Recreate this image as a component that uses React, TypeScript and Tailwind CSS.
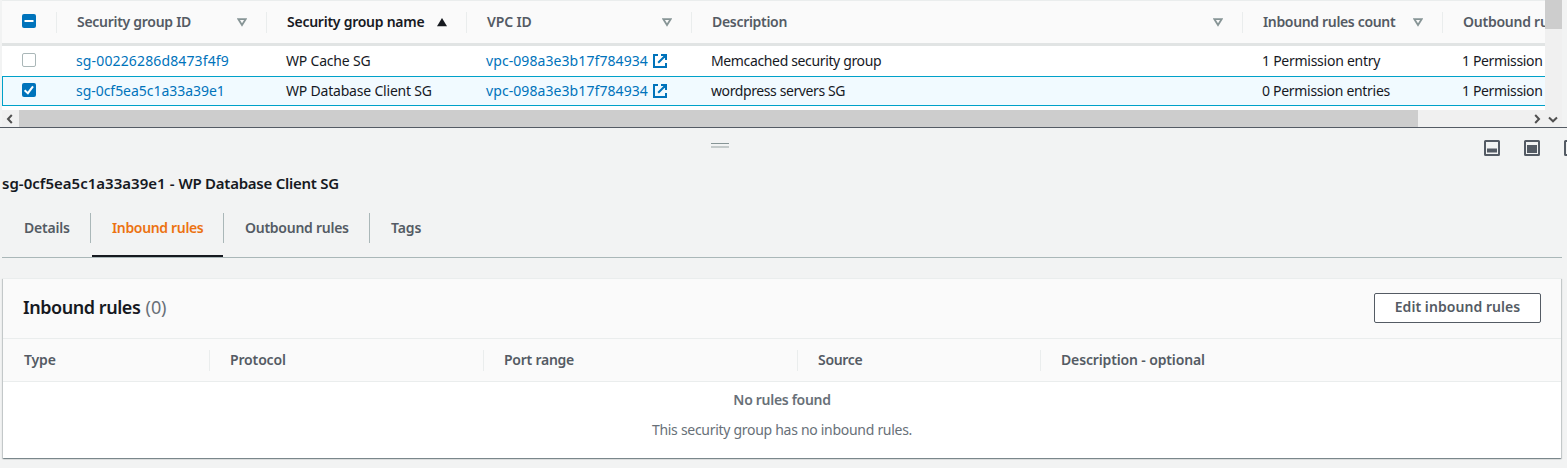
import type { ReactNode } from "react";

function SortIcon({ active = false }: { active?: boolean }) {
  return active ? (
    <svg className="h-[9px] w-[10px] shrink-0" viewBox="0 0 10 9">
      <path d="M5 0 10 8.2H0Z" fill="#16191f" />
    </svg>
  ) : (
    <svg className="h-[9px] w-[10px] shrink-0" viewBox="0 0 10 9">
      <path d="M1.4 1.2H8.6L5 7Z" fill="none" stroke="#879596" strokeWidth="1.8" />
    </svg>
  );
}

function Checkbox({ state }: { state: "off" | "on" | "mixed" }) {
  if (state === "off") {
    return <span className="block size-[14px] rounded-[2px] border border-[#aab7b8] bg-white" />;
  }
  return (
    <span className="block size-[14px] rounded-[2px] bg-[#0073bb]">
      <svg viewBox="0 0 14 14" className="block size-[14px]" fill="none" stroke="#fff" strokeWidth="2">
        {state === "on" ? <path d="M2.6 7.2 5.9 10.2 11 3.4" /> : <path d="M2.5 7H11.5" />}
      </svg>
    </span>
  );
}

function ExternalIcon() {
  return (
    <svg viewBox="0 0 14 14" className="size-[14px] shrink-0" fill="none" stroke="#0073bb" strokeWidth="2">
      <path d="M5 1H1V13H13V9M8 1H13V6M13 1 5.2 8.8" />
    </svg>
  );
}

function HeaderCell({ width, last = false, children }: { width: string; last?: boolean; children: ReactNode }) {
  return (
    <div className={`flex h-[21px] shrink-0 items-center justify-between pr-[19px] pb-px pl-5 ${last ? "" : "border-r border-[#eaeded]"} ${width}`}>
      {children}
    </div>
  );
}

const WIDTHS = ["w-[210px]", "w-[200px]", "w-[225px]", "w-[551px]", "w-[200px]", "w-[200px]"];

type Row = { id: string; idCls: string; name: string; desc: string; descCls: string; inbound: string; inCls: string; selected: boolean };

const ROWS: Row[] = [
  { id: "sg-00226286d8473f4f9", idCls: "tracking-[0.14px]", name: "WP Cache SG", desc: "Memcached security group", descCls: "tracking-[-0.36px]", inbound: "1 Permission entry", inCls: "tracking-[-0.26px]", selected: false },
  { id: "sg-0cf5ea5c1a33a39e1", idCls: "tracking-[-0.04px]", name: "WP Database Client SG", desc: "wordpress servers SG", descCls: "tracking-[-0.4px]", inbound: "0 Permission entries", inCls: "tracking-[-0.3px]", selected: true },
];

function TableRow({ row }: { row: Row }) {
  const cell = "shrink-0 pl-[19px]";
  return (
    <div className={`flex h-[30px] items-center overflow-hidden border whitespace-nowrap ${row.selected ? "border-r-0 border-[#00a1c9] bg-[#f1faff]" : "border-transparent bg-white"}`}>
      <div className="w-[54px] shrink-0 pb-[2px] pl-[19px]">
        <Checkbox state={row.selected ? "on" : "off"} />
      </div>
      <div className={`${cell} w-[210px] text-[#0073bb] ${row.idCls}`}>{row.id}</div>
      <div className={`${cell} w-[200px] tracking-[-0.2px]`}>{row.name}</div>
      <div className={`${cell} flex w-[225px] items-center gap-1 text-[#0073bb]`}>
        <span className="w-[163px] tracking-[0.08px]">vpc-098a3e3b17f784934</span>
        <ExternalIcon />
      </div>
      <div className={`${cell} w-[551px] ${row.descCls}`}>{row.desc}</div>
      <div className={`${cell} w-[200px] ${row.inCls}`}>{row.inbound}</div>
      <div className={`${cell} w-[200px] tracking-[-0.35px]`}>1 Permission entry</div>
    </div>
  );
}

function PanelIcon({ y, h }: { y: number; h: number }) {
  return (
    <svg viewBox="0 0 16 16" className="size-4 shrink-0">
      <rect x="1" y="1" width="14" height="14" rx="0.5" fill="none" stroke="#545b64" strokeWidth="2" />
      <rect x="3" y={y} width="10" height={h} fill="#545b64" />
    </svg>
  );
}

function Chevron({ d }: { d: string }) {
  return (
    <svg viewBox="0 0 10 10" className="size-[10px]" fill="none" stroke="#505050" strokeWidth="2">
      <path d={d} />
    </svg>
  );
}

export default function App() {
  return (
    <div className="h-[468px] w-full overflow-hidden bg-[#f2f3f3] font-['Noto_Sans',sans-serif] text-[14px] leading-[20px] text-[#16191f]">
      <div className="flex h-[128px] flex-col border-b border-[#545b64] pl-[2px]">
        <div className="flex h-[110px]">
          <div className="w-[1543px] overflow-hidden bg-white">
            <div className="flex h-[46px] items-start border-t border-b-[3px] border-t-[#eaeded] border-b-[#e1e4e4] bg-[#fafafa] pt-[11px] font-semibold whitespace-nowrap text-[#545b64]">
              <div className="h-[21px] w-[55px] shrink-0 border-r border-[#eaeded] pt-[2px] pl-[20px]">
                <Checkbox state="mixed" />
              </div>
              <HeaderCell width={WIDTHS[0]}>
                <span className="tracking-[-0.28px]">Security group ID</span>
                <SortIcon />
              </HeaderCell>
              <HeaderCell width={WIDTHS[1]}>
                <span className="tracking-[-0.25px] text-[#16191f]">Security group name</span>
                <SortIcon active />
              </HeaderCell>
              <HeaderCell width={WIDTHS[2]}>
                <span className="tracking-[-0.15px]">VPC ID</span>
                <SortIcon />
              </HeaderCell>
              <HeaderCell width={WIDTHS[3]}>
                <span className="tracking-[-0.3px]">Description</span>
                <SortIcon />
              </HeaderCell>
              <HeaderCell width={WIDTHS[4]}>
                <span className="tracking-[-0.34px]">Inbound rules count</span>
                <SortIcon />
              </HeaderCell>
              <HeaderCell width={WIDTHS[5]} last>
                <span className="tracking-[-0.25px]">Outbound rules count</span>
              </HeaderCell>
            </div>
            {ROWS.map((row) => (
              <TableRow key={row.id} row={row} />
            ))}
          </div>
          <div className="w-[17px] bg-[#f0f0f0]">
            <div className="h-[29px] bg-[#cdcdcd]" />
          </div>
        </div>
        <div className="flex h-[17px] w-[1560px] items-center bg-[#f0f0f0]">
          <div className="flex w-[17px] justify-center pr-px">
            <Chevron d="M6.8 1 3 5 6.8 9" />
          </div>
          <div className="h-[17px] w-[1399px] bg-[#cdcdcd]" />
          <div className="flex flex-1 items-center justify-end gap-[6px] pr-[4px]">
            <Chevron d="M3.2 1 7 5 3.2 9" />
            <Chevron d="M1 3.5 5 7.3 9 3.5" />
          </div>
        </div>
      </div>

      <div className="flex h-[44px] w-[1600px] pt-3">
        <div className="w-[711px]" />
        <div className="flex flex-col gap-[2px] pt-[3px]">
          <div className="h-px w-[18px] bg-[#879596]" />
          <div className="h-[2px] w-[18px] bg-[#c4caca]" />
        </div>
        <div className="w-[755px]" />
        <div className="flex gap-6">
          <PanelIcon y={8.5} h={4} />
          <PanelIcon y={5} h={8} />
          <PanelIcon y={3.5} h={9} />
        </div>
      </div>

      <h2 className="pt-px pb-px pl-[2px] text-[15px] leading-[20px] font-semibold">
        <span className="tracking-[0.02px]">sg-0cf5ea5c1a33a39e1 - </span>
        <span className="tracking-[-0.25px]">WP Database Client SG</span>
      </h2>

      <div className="mt-[19px] ml-[2px] flex h-[45px] w-[1560px] items-start border-b border-[#aab7b8] font-semibold text-[#545b64]">
        <div className="h-[30px] w-[89px] border-r border-[#aab7b8] pt-[5px] pl-[22px] tracking-[-0.2px]">Details</div>
        <div className="h-[44px] w-[133px] pl-px">
          <div className="flex h-[44px] w-[132px] flex-col">
            <div className="h-[30px] border-r border-[#aab7b8] pt-[5px] pl-5 tracking-[-0.34px] text-[#ec7211]">Inbound rules</div>
            <div className="mt-[12px] h-[2px] w-[131px] bg-[#16191f]" />
          </div>
        </div>
        <div className="h-[30px] w-[146px] border-r border-[#aab7b8] pt-[5px] pl-[21px] tracking-[-0.26px]">Outbound rules</div>
        <div className="h-[30px] pt-[5px] pl-[21px] tracking-[-0.1px]">Tags</div>
      </div>

      <div className="mt-5 ml-[3px] h-[180px] w-[1558px] border-t border-[#eaeded] bg-white shadow-[0_1px_1px_0_rgba(0,28,36,0.3),1px_1px_1px_0_rgba(0,28,36,0.15),-1px_1px_1px_0_rgba(0,28,36,0.15)]">
        <div className="flex h-[60px] items-center justify-between border-b border-[#eaeded] bg-[#fafafa] pr-5 pb-[2px] pl-5">
          <h3 className="pb-[2px] text-[18px] font-semibold tracking-[-0.45px]">
            Inbound rules <span className="ml-px font-normal tracking-[-0.1px] text-[#687078]">(0)</span>
          </h3>
          <button className="h-[30px] w-[167px] rounded-[2px] border border-[#545b64] bg-white pb-px font-semibold tracking-[0.06px] text-[#545b64]">
            Edit inbound rules
          </button>
        </div>
        <div className="flex h-[43px] items-center border-b border-[#eaeded] bg-[#fafafa] font-semibold text-[#545b64]">
          <div className="h-[21px] w-[207px] border-r border-[#eaeded] pl-[21px] tracking-[-0.15px]">Type</div>
          <div className="h-[21px] w-[274px] border-r border-[#eaeded] pl-5 tracking-[-0.15px]">Protocol</div>
          <div className="h-[21px] w-[314px] border-r border-[#eaeded] pl-5 tracking-[-0.25px]">Port range</div>
          <div className="h-[21px] w-[243px] border-r border-[#eaeded] pl-5 tracking-[-0.3px]">Source</div>
          <div className="h-[21px] pl-5 tracking-[-0.14px]">Description - optional</div>
        </div>
        <div className="flex flex-col items-center gap-[10px] pt-2 text-[#687078]">
          <div className="font-semibold tracking-[-0.3px]">No rules found</div>
          <div className="tracking-[-0.29px]">This security group has no inbound rules.</div>
        </div>
      </div>
    </div>
  );
}
